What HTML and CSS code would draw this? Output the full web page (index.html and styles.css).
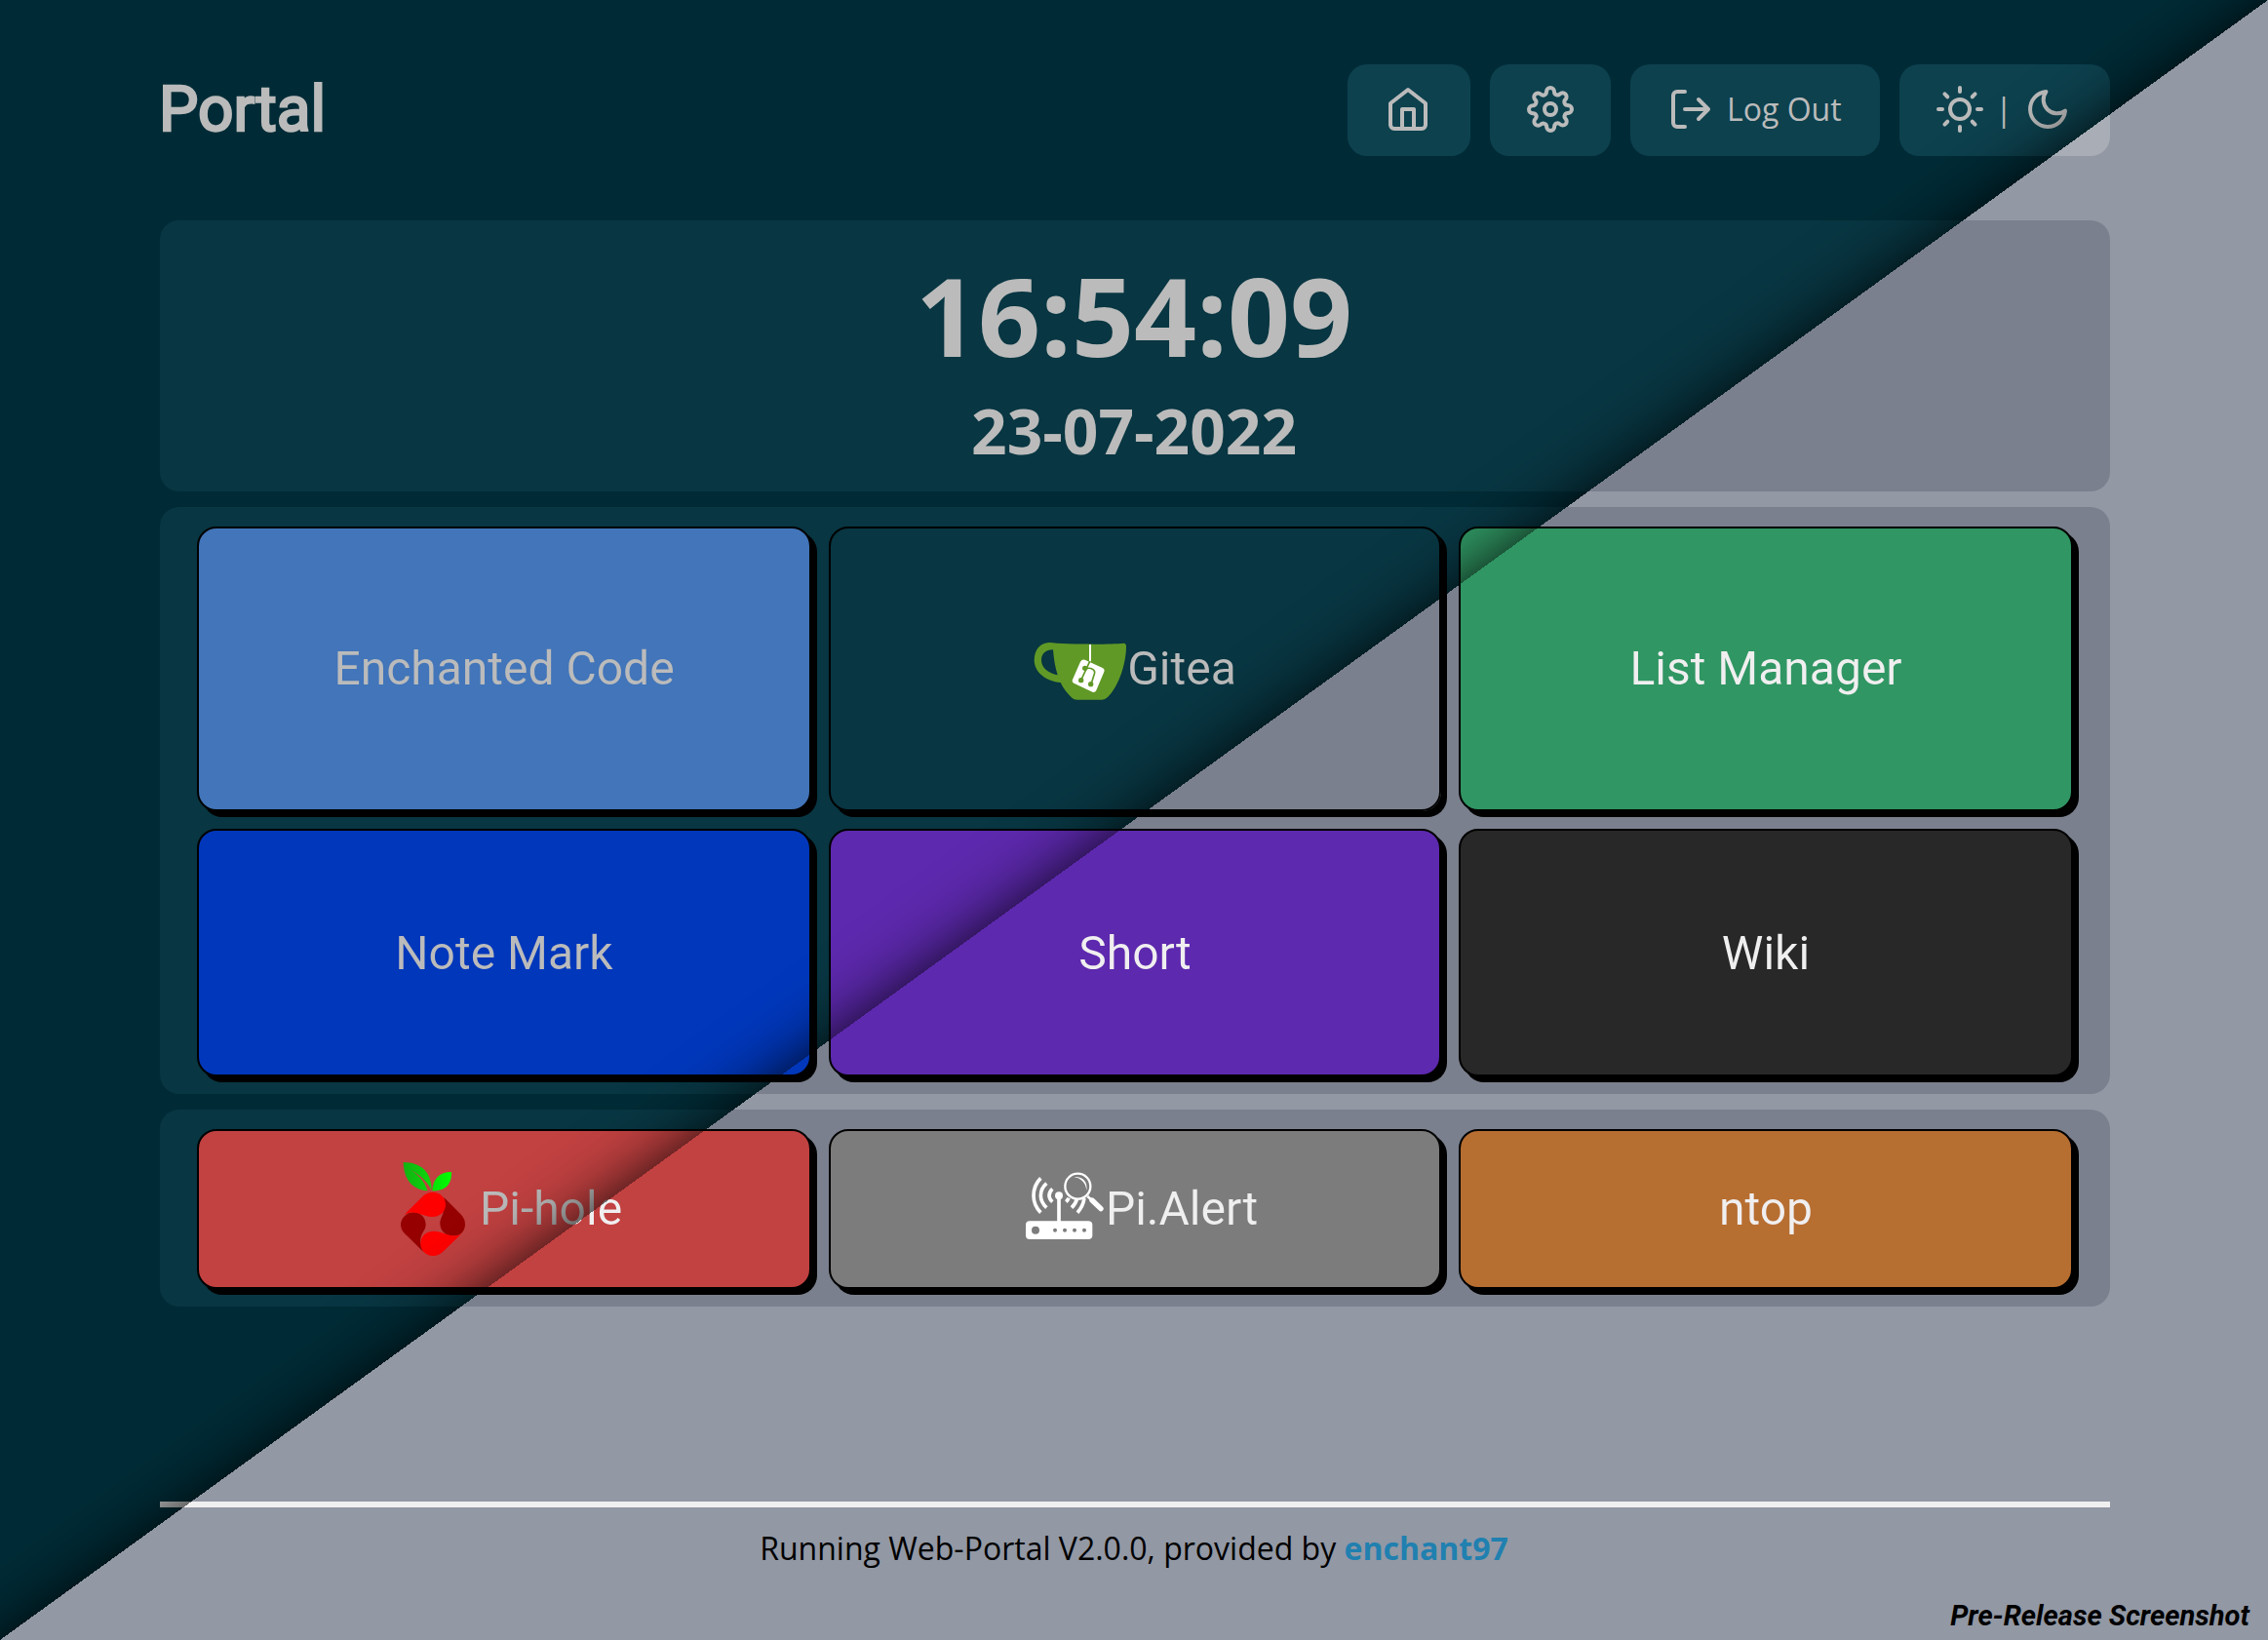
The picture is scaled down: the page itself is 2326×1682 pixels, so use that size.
FILE: index.html
```html
<!DOCTYPE html>
<html lang="en">
<head>
<meta charset="utf-8">
<title>Portal</title>
<link rel="stylesheet" href="styles.css">
</head>
<body>
<div class="page">
  <header class="header">
    <h1 class="title">Portal</h1>
    <nav class="nav">
      <a class="nav-button nav-home" aria-label="Home">
        <svg class="icon" viewBox="0 0 24 24"><path d="M3 9l9-7 9 7v11a2 2 0 0 1-2 2H5a2 2 0 0 1-2-2z"/><path d="M9 22V12h6v10"/></svg>
      </a>
      <a class="nav-button" aria-label="Settings">
        <svg class="icon" viewBox="0 0 24 24"><circle cx="12" cy="12" r="3"/><path d="M19.4 15a1.65 1.65 0 0 0 .33 1.82l.06.06a2 2 0 0 1 0 2.83 2 2 0 0 1-2.83 0l-.06-.06a1.65 1.65 0 0 0-1.82-.33 1.65 1.65 0 0 0-1 1.51V21a2 2 0 0 1-2 2 2 2 0 0 1-2-2v-.09A1.65 1.65 0 0 0 9 19.4a1.65 1.65 0 0 0-1.82.33l-.06.06a2 2 0 0 1-2.83 0 2 2 0 0 1 0-2.83l.06-.06a1.65 1.65 0 0 0 .33-1.82 1.65 1.65 0 0 0-1.51-1H3a2 2 0 0 1-2-2 2 2 0 0 1 2-2h.09A1.65 1.65 0 0 0 4.6 9a1.65 1.65 0 0 0-.33-1.82l-.06-.06a2 2 0 0 1 0-2.83 2 2 0 0 1 2.83 0l.06.06a1.65 1.65 0 0 0 1.82.33H9a1.65 1.65 0 0 0 1-1.51V3a2 2 0 0 1 2-2 2 2 0 0 1 2 2v.09a1.65 1.65 0 0 0 1 1.51 1.65 1.65 0 0 0 1.82-.33l.06-.06a2 2 0 0 1 2.83 0 2 2 0 0 1 0 2.83l-.06.06a1.65 1.65 0 0 0-.33 1.82V9a1.65 1.65 0 0 0 1.51 1H21a2 2 0 0 1 2 2 2 2 0 0 1-2 2h-.09a1.65 1.65 0 0 0-1.51 1z"/></svg>
      </a>
      <a class="nav-button nav-logout">
        <svg class="icon" viewBox="0 0 24 24"><path d="M9 21H5a2 2 0 0 1-2-2V5a2 2 0 0 1 2-2h4M16 17l5-5-5-5M21 12H9"/></svg>
        <span>Log Out</span>
      </a>
      <a class="nav-button nav-theme">
        <svg class="icon" viewBox="0 0 24 24"><circle cx="12" cy="12" r="5"/><path d="M12 1v2M12 21v2M4.22 4.22l1.42 1.42M18.36 18.36l1.42 1.42M1 12h2M21 12h2M4.22 19.78l1.42-1.42M18.36 5.64l1.42-1.42"/></svg>
        <span>|</span>
        <svg class="icon" viewBox="0 0 24 24"><path d="M21 12.79A9 9 0 1 1 11.21 3 7 7 0 0 0 21 12.79z"/></svg>
      </a>
    </nav>
  </header>

  <main class="content">
    <section class="panel clock">
      <div class="time">16:54:09</div>
      <div class="date">23-07-2022</div>
    </section>

    <section class="panel tiles tiles-main">
      <a class="tile tile-blue"><span class="label">Enchanted Code</span></a>
      <a class="tile">
        <svg class="logo" viewBox="60 24 288 288">
          <path fill="#609926" fill-rule="evenodd" d="M108 87C150 92 290 94 338 89Q345 90 345 99C345 155 320 225 288 255Q280 263 270 263H194Q184 263 178 257C163 243 151 228 143 210C100 206 64 180 62 143C62 108 80 89 108 87zM120 109C97 109 84 122 84 142C84 165 106 182 134 187Q123 153 120 109z"/>
          <path d="M234 93v52" stroke="#fff" stroke-width="6" fill="none"/>
          <path fill="#fff" d="M218 140L272 165Q280 169 277 177L253 234Q249 242 241 239L184 212Q177 208 180 201L204 146Q209 137 218 140z"/>
          <g stroke="#609926" stroke-width="5" fill="none"><path d="M233 145L227 158L206 203M220 168C235 162 252 170 247 184L237 215"/></g>
          <g fill="#609926"><circle cx="218" cy="166" r="8"/><circle cx="206" cy="203" r="8"/><circle cx="236" cy="215" r="8"/></g>
        </svg>
        <span class="label">Gitea</span>
      </a>
      <a class="tile tile-green"><span class="label">List Manager</span></a>
      <a class="tile tile-short tile-navy"><span class="label">Note Mark</span></a>
      <a class="tile tile-short tile-purple"><span class="label">Short</span></a>
      <a class="tile tile-short tile-black"><span class="label">Wiki</span></a>
    </section>

    <section class="panel tiles tiles-tools">
      <a class="tile tile-red">
        <svg class="logo" viewBox="18 66 288 288">
          <defs>
            <linearGradient id="leafA" x1="0" y1="0" x2="1" y2="0"><stop offset="0" stop-color="#12b212"/><stop offset="1" stop-color="#0bd80b"/></linearGradient>
            <linearGradient id="leafB" x1="0" y1="0" x2="1" y2="0"><stop offset="0" stop-color="#08e008"/><stop offset="1" stop-color="#00ff00"/></linearGradient>
          </defs>
          <path fill="url(#leafA)" d="M71 66C125 67 158 94 158 154C148 130 128 108 94 89C122 109 138 128 145 154C100 150 72 120 71 66z"/>
          <path fill="url(#leafB)" d="M219 96C220 130 205 154 160 154C162 118 180 96 219 96z"/>
          <path fill="#960000" d="M80 227C105 210 140 225 140 258C140 278 120 285 124 315L132 341L74 284Q63 272 63 257Q63 240 80 227z"/>
          <path fill="#960000" d="M196 174L250 229Q261 242 261 257Q261 272 250 284C225 303 184 290 184 254C184 235 203 220 196 174z"/>
          <path fill="#f00" d="M74 227L133 169Q145 158 162 158C182 158 201 174 201 196C201 222 180 235 158 234C125 231 105 210 74 227z"/>
          <path fill="#f00" d="M250 286L192 342Q179 354 162 354C140 354 124 338 124 316C124 293 142 278 164 278C195 278 222 304 250 286z"/>
        </svg>
        <span class="label">Pi-hole</span>
      </a>
      <a class="tile tile-gray">
        <svg class="logo" viewBox="24 35 288 288">
          <path fill="#fff" fill-rule="evenodd" d="M78 216H258Q271 216 271 228V260Q271 272 258 272H78Q66 272 66 260V228Q66 216 78 216zM96 232a12 12 0 1 0 0 24 12 12 0 1 0 0-24zM156 238a6 6 0 1 0 0 12 6 6 0 1 0 0-12zM186 238a6 6 0 1 0 0 12 6 6 0 1 0 0-12zM216 238a6 6 0 1 0 0 12 6 6 0 1 0 0-12zM246 238a6 6 0 1 0 0 12 6 6 0 1 0 0-12z"/>
          <circle cx="168" cy="138" r="12" fill="#fff"/>
          <g fill="none" stroke="#fff" stroke-width="11">
            <path d="M168 138v80"/>
            <path d="M112 84Q90 106 90 138Q90 168 112 190M130 100Q112 116 112 138Q112 158 130 175M148 117Q138 126 138 138Q138 148 148 157M190 157Q196 151 198 145M207 175Q220 163 224 146M225 190Q242 171 246 146"/>
            <path d="M256 140L272 154" stroke-width="8"/>
            <path d="M270 152L297 178" stroke-width="16" stroke-linecap="round"/>
          </g>
          <circle cx="226" cy="109" r="39" fill="#7c7c7c" stroke="#fff" stroke-width="7"/>
          <path d="M214 80C240 78 258 94 253 122C251 98 236 84 214 80z" fill="#fff"/>
        </svg>
        <span class="label">Pi.Alert</span>
      </a>
      <a class="tile tile-orange"><span class="label">ntop</span></a>
    </section>
  </main>

  <footer class="footer">Running Web-Portal V2.0.0, provided by <a class="author">enchant97</a></footer>
</div>
<div class="watermark">Pre-Release Screenshot</div>
</body>
</html>
```
FILE: styles.css
```css
:root {
  --text-dark-side: #bbbbbb;
  --text-light-side: #f0eff0;
}

* {
  box-sizing: border-box;
}

body {
  margin: 0;
  height: 1682px;
  overflow: hidden;
  font-family: "Open Sans", sans-serif;
  font-size: 32px;
  color: var(--text-dark-side);
  background: linear-gradient(to bottom right, #002b36 50%, #9298a4 50%) fixed;
}

/* soft shadow that the light theme casts on the dark one */
body::after {
  content: "";
  position: fixed;
  inset: 0;
  pointer-events: none;
  background: linear-gradient(to bottom right,
    transparent calc(50% - 95px),
    rgba(0, 0, 0, .005) calc(50% - 75px),
    rgba(0, 0, 0, .02) calc(50% - 60px),
    rgba(0, 0, 0, .06) calc(50% - 45px),
    rgba(0, 0, 0, .135) calc(50% - 30px),
    rgba(0, 0, 0, .26) calc(50% - 15px),
    rgba(0, 0, 0, .42) 50%,
    transparent 50%);
}

.page {
  width: 2000px;
  margin: 0 162px 0 164px;
}

.header {
  display: flex;
  justify-content: space-between;
  align-items: center;
  height: 226px;
}

.title {
  margin: 0 0 0 -1px;
  font: 400 64px/94px Roboto, sans-serif;
  -webkit-text-stroke: 2.5px currentColor;
}

.nav {
  display: flex;
  gap: 20px;
}

.nav-button {
  display: flex;
  align-items: center;
  height: 94px;
  padding: 0 38px 2px;
  border-radius: 20px;
  background: linear-gradient(to bottom right, #0d414e 50%, #a9adb5 50%) fixed;
}

.nav-home {
  padding-right: 40px;
}

.nav-logout {
  width: 256px;
  gap: 13px;
  white-space: nowrap;
}

.nav-theme {
  width: 216px;
  padding-right: 40px;
  justify-content: space-between;
}

.nav-button span {
  padding-bottom: 2px;
}

.icon {
  flex: none;
  width: 48px;
  height: 48px;
  fill: none;
  stroke: currentColor;
  stroke-width: 2;
  stroke-linecap: round;
  stroke-linejoin: round;
}

.content {
  display: flex;
  flex-direction: column;
  gap: 16px;
}

.panel {
  border-radius: 20px;
  background: linear-gradient(to bottom right, #083642 50%, #7b808e 50%) fixed;
}

.clock {
  height: 278px;
  padding: 20px 2px 0 0;
  text-align: center;
  font-weight: 700;
}

.time {
  font-size: 112px;
  line-height: 153px;
}

.date {
  font-size: 64px;
  line-height: 85px;
}

.tiles {
  display: grid;
  grid-template-columns: 630px 628px 630px;
  gap: 18px;
  padding: 20px 38px 18px;
}

.tiles-main {
  grid-template-rows: 292px 254px;
}

.tiles-tools {
  grid-template-rows: 164px;
}

.tile {
  display: flex;
  align-items: center;
  justify-content: center;
  border: 2px solid #000;
  border-radius: 20px;
  box-shadow: 6px 6px 0 #000;
  font: 48px/56px Roboto, sans-serif;
}

.tile-short {
  padding-top: 2px;
}

.tile-blue { background: #4275b9; }
.tile-green { background: #309663; }
.tile-navy { background: #0037bb; }
.tile-purple { background: #5d29ae; }
.tile-black { background: #282828; }
.tile-red { background: #c24141; }
.tile-gray { background: #7c7c7c; }
.tile-orange { background: #b76e31; }

.label {
  color: transparent;
  background: linear-gradient(to bottom right, var(--text-dark-side) 50%, var(--text-light-side) 50%) fixed;
  -webkit-background-clip: text;
  background-clip: text;
}

.logo {
  flex: none;
  width: 96px;
  height: 96px;
}

.footer {
  margin-top: 200px;
  line-height: 44px;
  text-align: center;
  color: #000;
}

.footer::before {
  content: "";
  display: block;
  height: 6px;
  margin-bottom: 20px;
  background: linear-gradient(to bottom right, var(--text-dark-side) 50%, var(--text-light-side) 50%) fixed;
}

.author {
  margin-right: 2px;
  font-weight: 700;
  color: #2080b0;
}

.watermark {
  position: absolute;
  right: 19px;
  bottom: 8px;
  font: italic 700 29.1px/33px Roboto, sans-serif;
  color: #000;
}
```
